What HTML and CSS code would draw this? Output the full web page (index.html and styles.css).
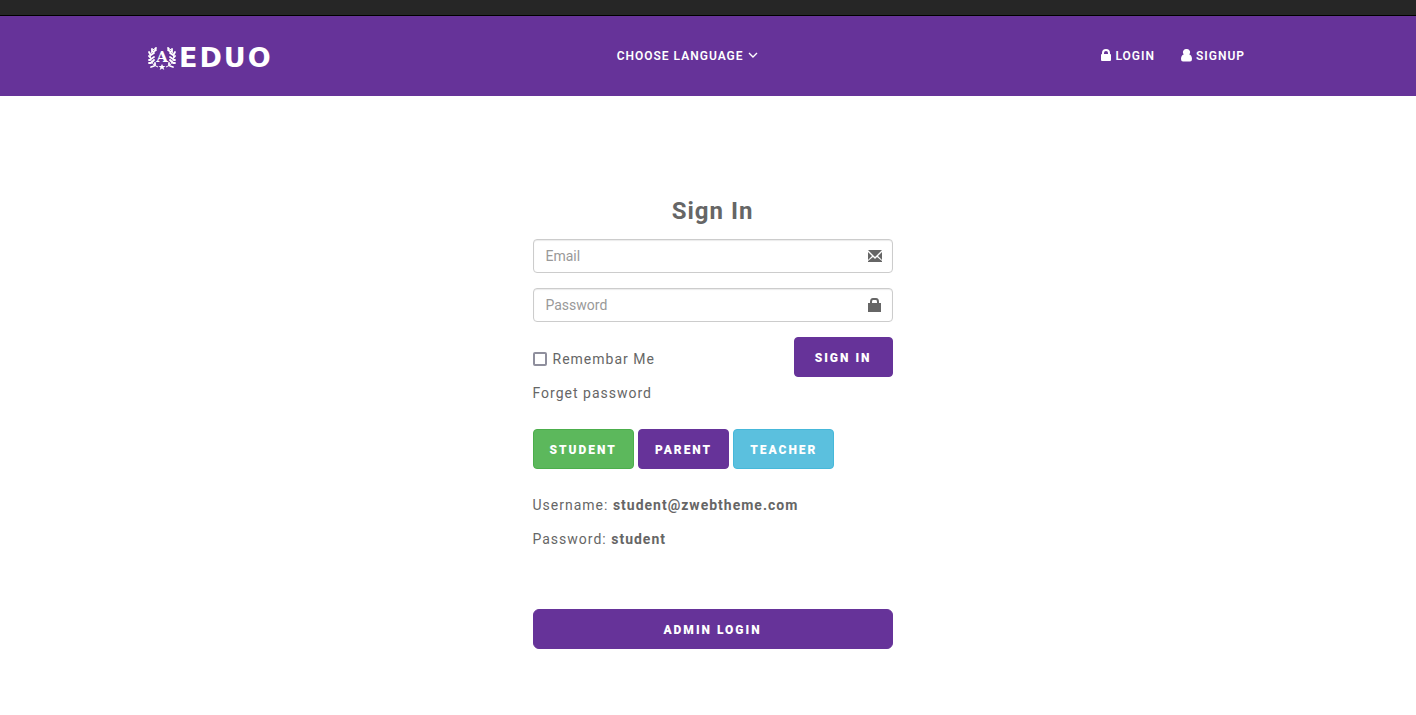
FILE: index.html
```html
<!DOCTYPE html>
<html lang="en">
<head>
  <meta charset="UTF-8">
  <meta name="viewport" content="width=device-width, initial-scale=1.0">
  <title>Eduo - Sign In</title>
  <link rel="stylesheet" href="styles.css">
</head>
<body>
  <div class="top-bar"></div>
  <header class="header">
    <div class="container">
      <a class="logo" href="#">
        <svg class="logo-emblem" viewBox="0 0 30 24" aria-hidden="true">
          <g fill="none" stroke="#fff" stroke-width="1">
            <path d="M7 3C1 8 2 18 11 21"/>
            <path d="M23 3c6 5 5 15-4 18"/>
          </g>
          <g fill="none" stroke="#fff" stroke-width="1.800" stroke-linecap="round">
            <path d="M8 3l1-1M5 5l0-2M3 8l-1-2M3 11l-1-1M3 14l-1 0M4 17l-2 0M7 20l-3 1M6 6l3-2M4 9l3-2M4 13l3-2M5 16l2-2M8 19l0-2"/>
            <path d="M22 3l-1-1M25 5l0-2M27 8l1-2M27 11l1-1M27 14l1 0M26 17l2 0M23 20l3 1M24 6l-3-2M26 9l-3-2M26 13l-3-2M25 16l-2-2M22 19l0-2"/>
          </g>
          <path fill="#fff" d="M15 18l1 2h2.500l-2 1.500.8 2.500-2.300-1.400-2.300 1.400.8-2.500-2-1.500H14z"/>
          <text class="logo-letter" x="15" y="16" text-anchor="middle">A</text>
        </svg>
        <span class="logo-name">EDUO</span>
      </a>
      <button class="language" type="button">
        Choose Language
        <svg width="10" height="10" viewBox="0 0 10 10" aria-hidden="true"><path d="M1 2l4 4 4-4" fill="none" stroke="#fff" stroke-width="1.400"/></svg>
      </button>
      <nav class="user-nav">
        <a href="#">
          <svg width="10" height="15" viewBox="0 0 10 15" aria-hidden="true"><path fill="#fff" fill-rule="evenodd" d="M1 5V4a4 4 0 0 1 8 0v1q1 0 1 1v5q0 1-1 1H1q-1 0-1-1V6q0-1 1-1zm2 0h4V4a2 2 0 0 0-4 0z"/></svg>
          Login
        </a>
        <a href="#">
          <svg width="11" height="15" viewBox="0 0 11 15" aria-hidden="true"><path fill="#fff" d="M5.500 0a3.300 3.300 0 0 1 2.800 5.400C10 6 11 7.500 11 10q0 2.500-2 2.500H2Q0 12.500 0 10c0-2.500 1-4 2.700-4.600A3.300 3.300 0 0 1 5.500 0z"/></svg>
          Signup
        </a>
      </nav>
    </div>
  </header>
  <main class="main">
    <form class="login-box">
      <h1>Sign In</h1>
      <div class="field">
        <input type="email" id="email" placeholder="Email" aria-label="Email">
        <svg width="14" height="14" viewBox="0 0 14 14" aria-hidden="true"><path fill="#666" d="M0 1h14L7 8zM0 3l4 4-4 4zM14 3v8l-4-4zM0 13v-1l5-4 2 2 2-2 5 4v1z"/></svg>
      </div>
      <div class="field">
        <input type="password" id="password" placeholder="Password" aria-label="Password">
        <svg width="14" height="14" viewBox="0 0 14 14" aria-hidden="true"><path fill="#666" fill-rule="evenodd" d="M0 5h2V4q0-4 3-4h3q3 0 3 4v1h2v9H0zm4 0h5V4q0-2-1-2H5Q4 2 4 4z"/></svg>
      </div>
      <div class="actions">
        <label class="remember" for="remember">
          <input type="checkbox" id="remember">
          Remembar Me
        </label>
        <button class="btn btn-signin" type="button">Sign In</button>
      </div>
      <a class="forget" href="#">Forget password</a>
      <div class="roles">
        <button class="btn btn-student" type="button">Student</button>
        <button class="btn" type="button">Parent</button>
        <button class="btn btn-teacher" type="button">Teacher</button>
      </div>
      <div class="credentials">
        <p>Username: <b>student@zwebtheme.com</b></p>
        <p>Password: <b>student</b></p>
      </div>
      <button class="btn btn-admin" type="button">Admin Login</button>
    </form>
  </main>
</body>
</html>
```
FILE: styles.css
```css
* {
  box-sizing: border-box;
}
body {
  margin: 0;
  font-family: Roboto, Arial, sans-serif;
  font-size: 14px;
  line-height: 24px;
  letter-spacing: 1px;
  color: #666;
  background-color: #fff;
}
a {
  color: inherit;
  text-decoration: none;
}
button {
  font-family: inherit;
  cursor: pointer;
}
.top-bar {
  height: 16px;
  background-color: #262626;
  border-bottom: 1px solid #000;
}
.header {
  background-color: #663399;
  color: #fff;
}
.container {
  display: flex;
  justify-content: space-between;
  align-items: center;
  max-width: 1170px;
  height: 80px;
  margin: 0 auto;
  padding: 0 48px 0 24px;
}
.logo {
  display: flex;
  align-items: center;
  gap: 2px;
  padding-top: 4px;
}
.logo-emblem {
  width: 30px;
  height: 24px;
}
.logo-letter {
  font-family: "DejaVu Serif", serif;
  font-size: 15px;
  font-weight: bold;
  letter-spacing: 0;
  fill: #fff;
}
.logo-name {
  font-family: "DejaVu Sans", sans-serif;
  font-size: 27px;
  font-weight: bold;
  letter-spacing: 2px;
}
.language,
.user-nav a {
  display: flex;
  align-items: center;
  gap: 4px;
  font-size: 12px;
  font-weight: 600;
  letter-spacing: 1px;
  text-transform: uppercase;
}
.language {
  padding: 0;
  border: 0;
  color: #fff;
  background: none;
}
.user-nav {
  display: flex;
  gap: 26px;
}
.main {
  padding: 99px 0 66px 9px;
}
.login-box {
  max-width: 360px;
  margin: 0 auto;
}
h1 {
  margin: 0 0 12px;
  font-size: 24px;
  line-height: 32px;
  text-align: center;
}
.field {
  position: relative;
  margin-bottom: 15px;
}
.field input {
  display: block;
  width: 100%;
  height: 34px;
  padding: 6px 36px 6px 12px;
  border: 1px solid #ccc;
  border-radius: 4px;
  font-family: inherit;
  font-size: 14px;
  box-shadow: inset 0 1px 1px rgba(0, 0, 0, 0.08);
}
.field input::placeholder {
  color: #999;
}
/* icon over the right end of the text box */
.field svg {
  position: absolute;
  top: 10px;
  right: 11px;
}
.actions {
  display: flex;
  justify-content: space-between;
  align-items: center;
  margin-bottom: 4px;
}
.remember {
  display: flex;
  align-items: center;
  gap: 6px;
  padding-top: 4px;
}
.remember input {
  appearance: none;
  width: 14px;
  height: 14px;
  margin: 0;
  border: 2px solid #8f8f9d;
  border-radius: 2px;
}
.remember input:checked {
  background-color: #663399;
}
.forget {
  display: block;
}
.btn {
  height: 40px;
  padding: 2px 16px 0;
  border: 1px solid #663399;
  border-radius: 4px;
  color: #fff;
  background-color: #663399;
  font-size: 12px;
  font-weight: 900;
  letter-spacing: 2px;
  text-transform: uppercase;
}
.btn-signin {
  padding: 2px 20px 0;
}
.roles {
  display: flex;
  gap: 4px;
  margin: 24px 0;
}
.btn-student {
  border-color: #4cae4c;
  background-color: #5cb85c;
}
.btn-teacher {
  border-color: #46b8da;
  background-color: #5bc0de;
}
.credentials p {
  margin: 0 0 10px;
}
.btn-admin {
  width: 100%;
  margin-top: 48px;
  border-radius: 6px;
}
```
